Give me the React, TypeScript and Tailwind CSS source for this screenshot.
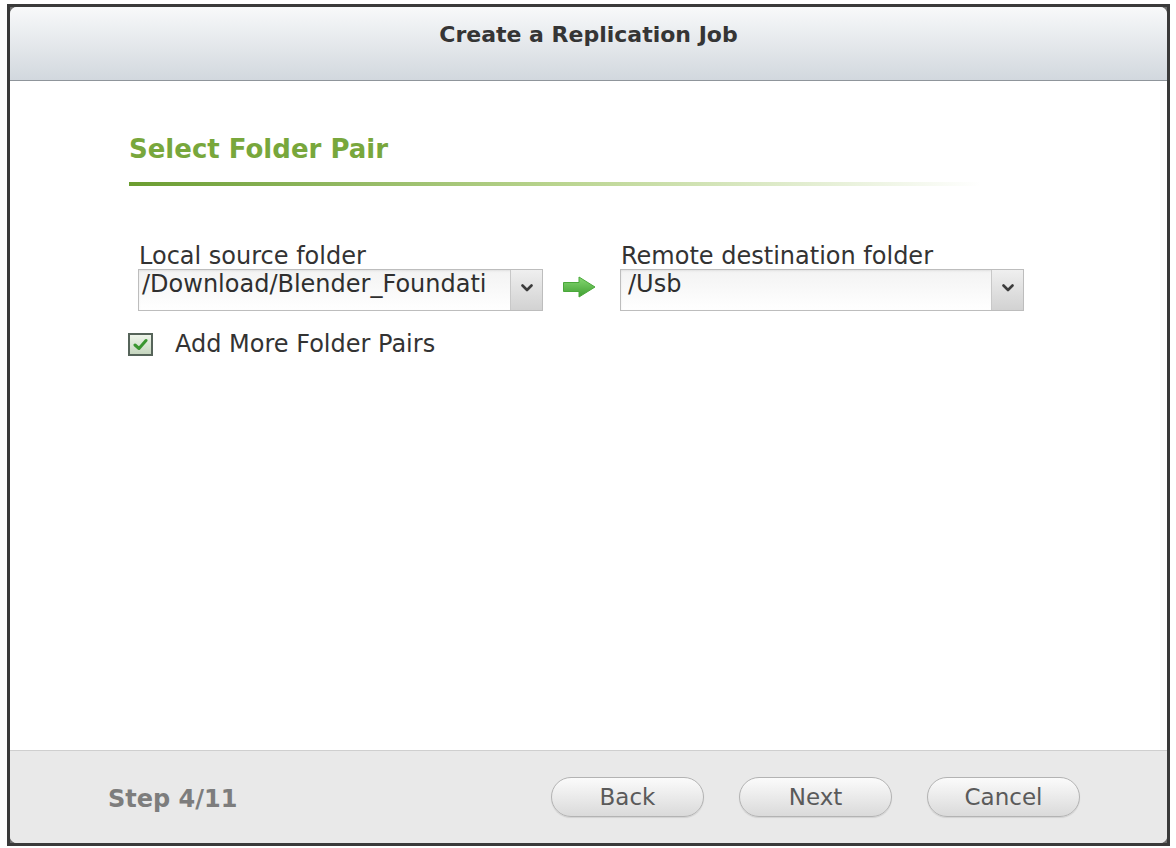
import React from 'react';

const font = "font-['DejaVu_Sans','Liberation_Sans',sans-serif]";

function Chevron() {
    return (
        <svg width="12" height="8" viewBox="0 0 12 8" className="-mt-[4px]">
            <path d="M1.5 1.5 L6 6 L10.5 1.5" fill="none" stroke="#3c3c3c" strokeWidth="2.6" strokeLinecap="round" strokeLinejoin="round" />
        </svg>
    );
}

function SelectBox({ value, pad }: { value: string; pad: string }) {
    return (
        <div className="flex h-[42px] w-full border border-[#bdbdbd] bg-gradient-to-b from-[#f3f3f3] to-white shadow-[inset_0_1px_2px_rgba(0,0,0,0.08)]">
            <div className={`flex-1 overflow-hidden whitespace-nowrap text-[24px] leading-[28px] text-[#2f2f2f] ${pad}`}>
                {value}
            </div>
            <div className="flex w-[32px] items-center justify-center border-l border-[#c8c8c8] bg-gradient-to-b from-[#efefef] to-[#d2d2d2]">
                <Chevron />
            </div>
        </div>
    );
}

function GreenArrow() {
    return (
        <svg width="34" height="22" viewBox="0 0 34 22">
            <defs>
                <linearGradient id="ga" x1="0" y1="0" x2="0" y2="1">
                    <stop offset="0" stopColor="#86d872" />
                    <stop offset="1" stopColor="#3f9e31" />
                </linearGradient>
            </defs>
            <path d="M1.5 6.5 H17 V1 L33 11 L17 21 V15.5 H1.5 Z" fill="url(#ga)" stroke="#4aa83a" strokeWidth="1" strokeLinejoin="round" />
        </svg>
    );
}

function Checkbox() {
    return (
        <div className="flex h-[23px] w-[25px] items-center justify-center border-2 border-[#56645a] bg-gradient-to-b from-[#eef5ea] to-[#c6d6bf]">
            <svg width="15" height="13" viewBox="0 0 15 13">
                <path d="M2 7 L6 10.5 L13 2.5" fill="none" stroke="#3a9630" strokeWidth="3" strokeLinecap="round" strokeLinejoin="round" />
            </svg>
        </div>
    );
}

function PillButton({ label }: { label: string }) {
    return (
        <button className="h-[40px] w-[153px] rounded-full border border-[#b3b3b3] bg-gradient-to-b from-[#fbfbfb] to-[#dadada] text-[23px] leading-[28px] text-[#5a5a5a] shadow-[0_1px_1px_rgba(0,0,0,0.1)]">
            {label}
        </button>
    );
}

export default function App() {
    return (
        <div className={`min-h-[848px] bg-white pt-[4px] pl-[7px] ${font}`}>
            <div className="h-[842px] w-[1163px] border-[3px] border-[#3a3a3a] bg-[#6e6e6e]">
                <div className="flex h-full flex-col overflow-hidden rounded-[7px] bg-white">
                    {/* header */}
                    <div className="h-[74px] border-b border-[#8f959b] bg-gradient-to-b from-[#f8f9fa] to-[#d2d8de] pt-[15px] text-center text-[22px] font-bold leading-[26px] text-[#353535]">
                        Create a Replication Job
                    </div>

                    {/* body */}
                    <div className="flex-1">
                        <div className="ml-[119px] mt-[53px] text-[26px] font-bold leading-[30px] text-[#78a73c]">
                            Select Folder Pair
                        </div>
                        <div className="ml-[119px] mt-[18px] h-[4px] w-[852px] bg-gradient-to-r from-[#6b9d2f] via-[#b9d48e] to-transparent" />

                        <div className="ml-[128px] mt-[57px] flex items-start">
                            <div className="w-[405px]">
                                <div className="pl-[1px] text-[24px] leading-[26px] text-[#333]">Local source folder</div>
                                <SelectBox value="/Download/Blender_Foundati" pad="pl-[3px]" />
                            </div>
                            <div className="ml-[19px] mr-[24px] mt-[33px]">
                                <GreenArrow />
                            </div>
                            <div className="w-[404px]">
                                <div className="pl-[1px] text-[24px] leading-[26px] text-[#333]">Remote destination folder</div>
                                <SelectBox value="/Usb" pad="pl-[7px]" />
                            </div>
                        </div>

                        <div className="ml-[118px] mt-[19px] flex items-center">
                            <Checkbox />
                            <span className="ml-[22px] text-[24px] leading-[28px] text-[#333]">Add More Folder Pairs</span>
                        </div>
                    </div>

                    {/* footer */}
                    <div className="flex h-[93px] items-center border-t border-[#cfcfcf] bg-[#e9e9e9] pl-[98px] pr-[87px]">
                        <span className="mt-[3px] text-[24px] font-bold leading-[28px] text-[#7d7d7d]">Step 4/11</span>
                        <div className="ml-auto flex gap-[35px]">
                            <PillButton label="Back" />
                            <PillButton label="Next" />
                            <PillButton label="Cancel" />
                        </div>
                    </div>
                </div>
            </div>
        </div>
    );
}
